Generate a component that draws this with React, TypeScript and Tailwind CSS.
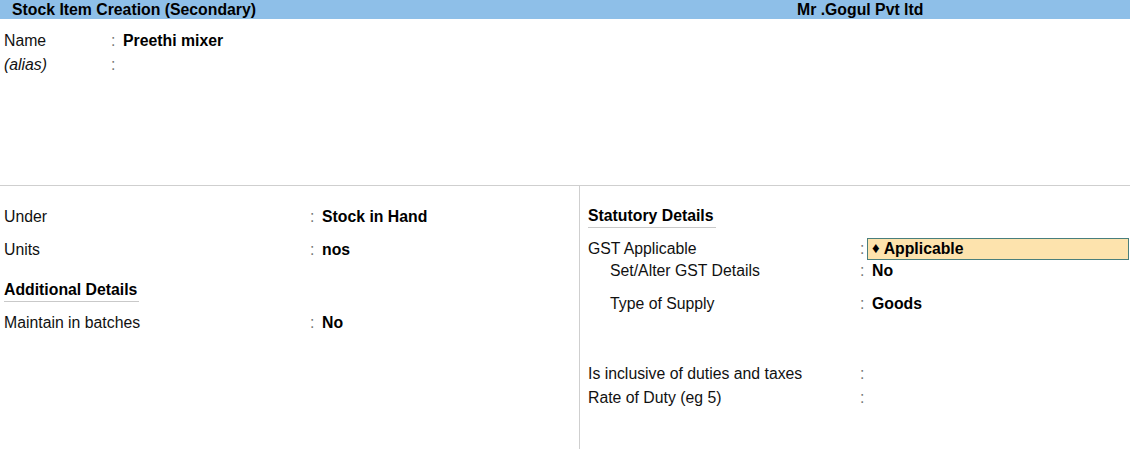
const font = { fontFamily: '"Liberation Sans", Arial, sans-serif' };

interface IRow {
  label: string,
  value?: string,
  labelWidth: string,
  italic?: boolean,
  indent?: boolean,
  className?: string,
}

const Row = ({ label, value, labelWidth, italic, indent, className }: IRow) => (
  <div className={`flex h-[24px] items-center leading-[24px] ${className || ''}`}>
    <span className={`${labelWidth} ${italic ? 'italic' : ''} ${indent ? 'pl-[22px]' : ''} text-[#111]`}>
      {label}
    </span>
    <span className="w-[12px] text-[#777]">:</span>
    <span className="font-bold text-black">{value}</span>
  </div>
);

const SectionTitle = ({ title, className }: { title: string, className?: string }) => (
  <div className={`h-[24px] ${className || ''}`}>
    <span className="inline-block border-b border-[#c9c9c9] pr-[2px] font-bold leading-[22px] text-black">
      {title}
    </span>
  </div>
);

export default function App() {
  return (
    <div className="flex h-[449px] w-[1130px] flex-col overflow-hidden bg-white text-[15.8px]" style={font}>
      <div className="flex h-[19px] items-center bg-[#8ebfe8] font-bold leading-[19px] text-black">
        <span className="w-[797px] pl-[12px]">Stock Item Creation (Secondary)</span>
        <span>Mr .Gogul Pvt ltd</span>
      </div>

      <div className="h-[167px] border-b border-[#cfcfcf] pl-[4px] pt-[10px]">
        <Row label="Name" value="Preethi mixer" labelWidth="w-[107px]" />
        <Row label="(alias)" labelWidth="w-[107px]" italic />
      </div>

      <div className="flex flex-1">
        <div className="w-[580px] border-r border-[#cfcfcf] pl-[4px]">
          <Row label="Under" value="Stock in Hand" labelWidth="w-[306px]" className="mt-[19px]" />
          <Row label="Units" value="nos" labelWidth="w-[306px]" className="mt-[9px]" />
          <SectionTitle title="Additional Details" className="mt-[16px]" />
          <Row label="Maintain in batches" value="No" labelWidth="w-[306px]" className="mt-[9px]" />
        </div>

        <div className="flex-1 pl-[8px] pr-[1px]">
          <SectionTitle title="Statutory Details" className="mt-[18px]" />
          <div className="mt-[10px] flex h-[22px] items-center">
            <span className="w-[272px] text-[#111]">GST Applicable</span>
            <span className="w-[7px] text-[#777]">:</span>
            <span className="flex h-[22px] flex-1 items-center border border-[#4a7f7c] bg-[#fde3ad] pl-[4px] font-bold text-black">
              <span className="mr-[4px] -mt-[3px] text-[15px] leading-none">♦</span>
              Applicable
            </span>
          </div>
          <Row label="Set/Alter GST Details" value="No" labelWidth="w-[272px]" indent className="-mt-[1px]" />
          <Row label="Type of Supply" value="Goods" labelWidth="w-[272px]" indent className="mt-[9px]" />
          <Row label="Is inclusive of duties and taxes" labelWidth="w-[272px]" className="mt-[46px]" />
          <Row label="Rate of Duty (eg 5)" labelWidth="w-[272px]" />
        </div>
      </div>
    </div>
  );
}
